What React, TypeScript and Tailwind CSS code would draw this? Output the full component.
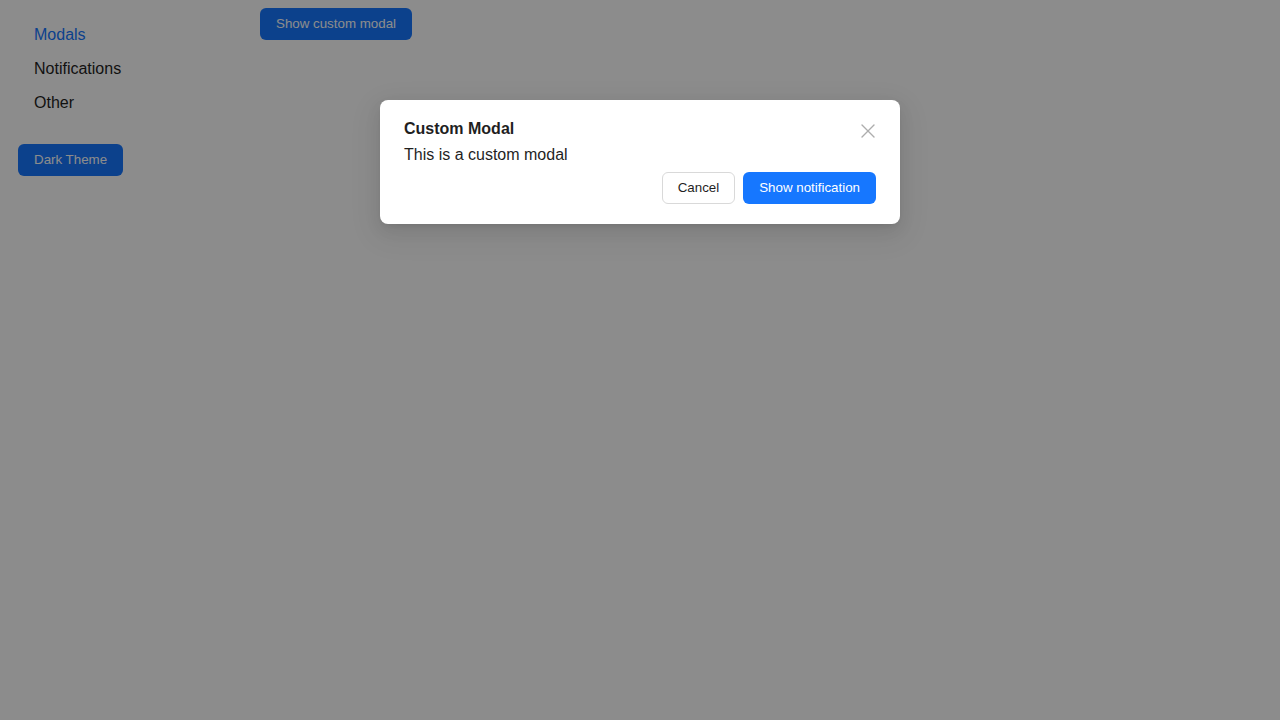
import { X } from "lucide-react";

const menu = [
  { label: "Modals", active: true },
  { label: "Notifications", active: false },
  { label: "Other", active: false },
];

function Sidebar() {
  return (
    <aside className="w-[252px] shrink-0 pt-[18px]">
      <ul>
        {menu.map((m) => (
          <li
            key={m.label}
            className={`h-[34px] pl-[34px] text-[16px] leading-[34px] ${
              m.active ? "text-[#1677ff]" : "text-[#1f1f1f]"
            }`}
          >
            {m.label}
          </li>
        ))}
      </ul>
      <button className="ml-[18px] mt-[24px] h-8 rounded-md bg-[#1677ff] px-4 text-[13.333px] text-white">
        Dark Theme
      </button>
    </aside>
  );
}

function CustomModal() {
  return (
    <div className="relative h-fit w-[520px] rounded-lg bg-white px-6 pt-[18px] pb-5 shadow-[0_6px_16px_0_rgba(0,0,0,0.08),0_3px_6px_-4px_rgba(0,0,0,0.12),0_9px_28px_8px_rgba(0,0,0,0.05)]">
      <button className="absolute right-[20px] top-[19px] text-[#adadad]">
        <X size={24} strokeWidth={1.4} />
      </button>
      <div className="text-[16px] font-bold leading-[22px] text-[#1f1f1f]">Custom Modal</div>
      <p className="mt-[3px] text-[16px] leading-[24px] text-[#1f1f1f]">This is a custom modal</p>
      <div className="mt-[5px] flex justify-end gap-2">
        <button className="h-8 rounded-md border border-[#d9d9d9] bg-white px-[15px] text-[13.333px] text-[#1f1f1f]">
          Cancel
        </button>
        <button className="h-8 rounded-md bg-[#1677ff] px-4 text-[13.333px] text-white">
          Show notification
        </button>
      </div>
    </div>
  );
}

export default function App() {
  return (
    <div className="relative h-[720px] w-[1280px] overflow-hidden bg-white font-['Liberation_Sans',Arial,sans-serif]">
      <div className="flex h-full">
        <Sidebar />
        <main className="flex-1 pt-2 pl-2">
          <button className="h-8 rounded-md bg-[#1677ff] px-4 text-[13.333px] text-white">
            Show custom modal
          </button>
        </main>
      </div>

      {/* mask + dialog */}
      <div className="absolute inset-0 flex items-start justify-center bg-black/45 pt-[100px]">
        <CustomModal />
      </div>
    </div>
  );
}
